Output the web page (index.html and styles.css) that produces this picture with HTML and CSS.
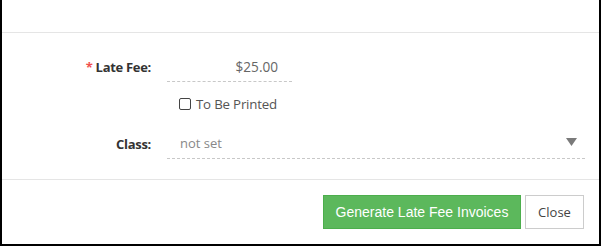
FILE: index.html
```html
<!DOCTYPE html>
<html>
<head>
<meta charset="utf-8">
<link rel="stylesheet" href="styles.css">
</head>
<body>
<div class="modal">
  <div class="modal-header"></div>
  <div class="modal-body">
    <div class="row row-fee">
      <label class="label"><span class="req">*</span> Late Fee:</label>
      <div class="input input-fee">$25.00</div>
    </div>
    <div class="row row-check">
      <div class="label"></div>
      <label class="check"><span class="box"></span>To Be Printed</label>
    </div>
    <div class="row row-class">
      <label class="label">Class:</label>
      <div class="input input-select">
        <span class="placeholder">not set</span>
        <svg class="caret" width="11" height="8" viewBox="0 0 11 8"><polygon points="0,0 11,0 5.5,8" fill="#7a7a7a"/></svg>
      </div>
    </div>
  </div>
  <div class="modal-footer">
    <button class="btn btn-success">Generate Late Fee Invoices</button>
    <button class="btn btn-default">Close</button>
  </div>
</div>
</body>
</html>
```

FILE: styles.css
```css
* { box-sizing: border-box; }
html, body { margin: 0; padding: 0; background: #fff; }
body { font-family: "Open Sans", "Noto Sans", sans-serif; font-size: 13px; color: #333; }
.modal {
  width: 601px;
  height: 246px;
  border-left: 2px solid #000;
  border-right: 2px solid #000;
  border-bottom: 2px solid #000;
  display: flex;
  flex-direction: column;
}
.modal-header { height: 33px; border-bottom: 1px solid #e5e5e5; flex: none; }
.modal-body { height: 147px; border-bottom: 1px solid #e5e5e5; padding-top: 18px; flex: none; }
.row { display: flex; align-items: center; }
.label { width: 149px; margin-right: 16px; text-align: right; font-weight: 700; color: #333; flex: none; letter-spacing: -0.3px; }
.req { color: #f0504f; font-weight: 700; }
.input { height: 31px; border-bottom: 1px dashed #c8c8c8; display: flex; align-items: center; color: #666; }
.input-fee { width: 125px; justify-content: flex-end; padding-right: 14px; font-size: 13.6px; }
.row-check { height: 18px; margin-top: 13px; }
.check { display: flex; align-items: center; color: #555; margin-left: 12px; font-size: 13.3px; letter-spacing: -0.2px; }
.box { width: 12px; height: 12px; border: 1px solid #444; border-radius: 2px; margin-right: 5px; }
.row-class { margin-top: 15px; }
.input-select { width: 418px; padding-left: 13px; padding-right: 8px; justify-content: space-between; }
.placeholder { color: #888; }
.caret { margin-top: -3px; }
.modal-footer { flex: 1; display: flex; justify-content: flex-end; align-items: flex-start; padding: 15px 15px 0 0; gap: 4px; }
.btn { height: 34px; border-radius: 0; font-size: 14px; cursor: pointer; }
.btn-success { width: 198px; background: #5cb85c; border: 1px solid #4cae4c; color: #fff; font-family: "Liberation Sans", Arial, sans-serif; }
.btn-default { width: 59px; background: #fff; border: 1px solid #ccc; color: #444; font-family: "Open Sans", sans-serif; font-size: 13px; }
```
